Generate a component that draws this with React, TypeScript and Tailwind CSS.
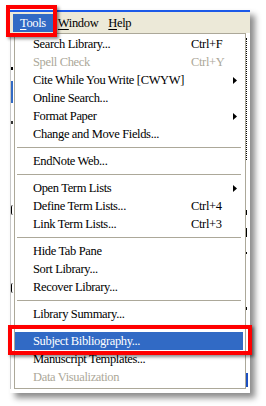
import type { ReactNode } from "react";

type Item =
  | { kind: "sep" }
  | {
      kind: "item";
      label: string;
      shortcut?: string;
      submenu?: boolean;
      disabled?: boolean;
      active?: boolean;
    };

const items: Item[] = [
  { kind: "item", label: "Search Library...", shortcut: "Ctrl+F" },
  { kind: "item", label: "Spell Check", shortcut: "Ctrl+Y", disabled: true },
  { kind: "item", label: "Cite While You Write [CWYW]", submenu: true },
  { kind: "item", label: "Online Search..." },
  { kind: "item", label: "Format Paper", submenu: true },
  { kind: "item", label: "Change and Move Fields..." },
  { kind: "sep" },
  { kind: "item", label: "EndNote Web..." },
  { kind: "sep" },
  { kind: "item", label: "Open Term Lists", submenu: true },
  { kind: "item", label: "Define Term Lists...", shortcut: "Ctrl+4" },
  { kind: "item", label: "Link Term Lists...", shortcut: "Ctrl+3" },
  { kind: "sep" },
  { kind: "item", label: "Hide Tab Pane" },
  { kind: "item", label: "Sort Library..." },
  { kind: "item", label: "Recover Library..." },
  { kind: "sep" },
  { kind: "item", label: "Library Summary..." },
  { kind: "sep" },
  { kind: "item", label: "Subject Bibliography...", active: true },
  { kind: "item", label: "Manuscript Templates..." },
  { kind: "item", label: "Data Visualization", disabled: true },
];

function Arrow() {
  return (
    <svg width="4" height="7" viewBox="0 0 4 7" className="ml-auto mr-[8px]">
      <path d="M0 0 L4 3.5 L0 7 Z" fill="#000" />
    </svg>
  );
}

function BarItem({ children, active }: { children: ReactNode; active?: boolean }) {
  return (
    <div
      className={
        active
          ? "h-[18px] leading-[18px] px-[7px] bg-[#316ac5] text-white"
          : "h-[18px] leading-[18px] px-[5px] text-black"
      }
    >
      {children}
    </div>
  );
}

function MenuRow({ item }: { item: Item }) {
  if (item.kind === "sep") {
    return (
      <div className="h-[9px] flex items-center ml-[2px] mr-[4px]">
        <div className="h-px w-full bg-[#aca899]" />
      </div>
    );
  }
  const color = item.active
    ? "text-white bg-[#316ac5] mr-[2px]"
    : item.disabled
    ? "text-[#aca899]"
    : "text-black";
  return (
    <div className={`h-[18px] leading-[18px] flex items-center pl-[18px] ${color}`}>
      <span className="w-[158px] shrink-0 whitespace-nowrap">{item.label}</span>
      {item.shortcut ? <span className="whitespace-nowrap">{item.shortcut}</span> : null}
      {item.submenu ? <Arrow /> : null}
    </div>
  );
}

export default function App() {
  return (
    <div className="relative w-[266px] h-[406px] bg-white overflow-hidden pl-[10px] pt-[10px] font-['Liberation_Serif',serif] text-[12.5px] tracking-[-0.35px]">
      <div className="w-[240px] h-[383px] bg-white flex flex-col shadow-[5px_5px_6px_rgba(0,0,0,0.45)]">
        <div className="h-[2px] bg-[#1c5ae8]" />
        <div className="h-[21px] bg-[#ece9d8] flex pl-[3px] pt-[2px]">
          <BarItem active>
            <u className="underline-offset-2">T</u>ools
          </BarItem>
          <BarItem>
            <u className="underline-offset-2">W</u>indow
          </BarItem>
          <BarItem>
            <u className="underline-offset-2">H</u>elp
          </BarItem>
        </div>
        <div className="flex">
          {/* app behind the menu, left side */}
          <div className="relative w-[4px] h-[356px] border-l border-[#c8c8c8]">
            <div className="absolute left-0 top-[34px] w-[2px] h-[3px] bg-black" />
            <div className="absolute left-0 top-[48px] w-[2px] h-[22px] bg-[#316ac5]" />
            <div className="absolute left-0 top-[88px] w-[2px] h-[3px] bg-[#333]" />
            <div className="absolute left-0 top-[172px] w-[2px] h-[10px] border-l border-black rounded-l-full" />
            <div className="absolute left-0 top-[250px] w-[2px] h-[10px] border-l border-black rounded-l-full" />
          </div>
          <div className="w-[232px] h-[356px] border border-[#aca899] bg-white pt-[1px] pb-[2px] flex flex-col">
            {items.map((it, i) => (
              <MenuRow key={i} item={it} />
            ))}
          </div>
          {/* app behind the menu, right side */}
          <div className="relative flex-1 h-[356px]">
            <div className="absolute left-0 top-[5px] h-[122px] border-l border-dotted border-black" />
            <div className="absolute left-0 top-[177px] w-px h-[5px] bg-black" />
            <div className="absolute left-0 top-[195px] w-px h-[9px] bg-black" />
            <div className="absolute left-0 top-[219px] w-px h-[2px] bg-black" />
            <div className="absolute left-0 top-[274px] w-px h-[3px] bg-black" />
            <div className="absolute left-0 top-[340px] w-[2px] h-[14px] bg-[#1c4fc0]" />
          </div>
        </div>
      </div>
      {/* annotation boxes */}
      <div className="absolute left-[6px] top-[5px] w-[51px] h-[32px] border-[4px] border-[#ff0000] shadow-[2px_2px_3px_rgba(0,0,0,0.45)]" />
      <div className="absolute left-[8px] top-[325px] w-[244px] h-[30px] border-[4px] border-[#ff0000] shadow-[2px_2px_3px_rgba(0,0,0,0.45)]" />
    </div>
  );
}
